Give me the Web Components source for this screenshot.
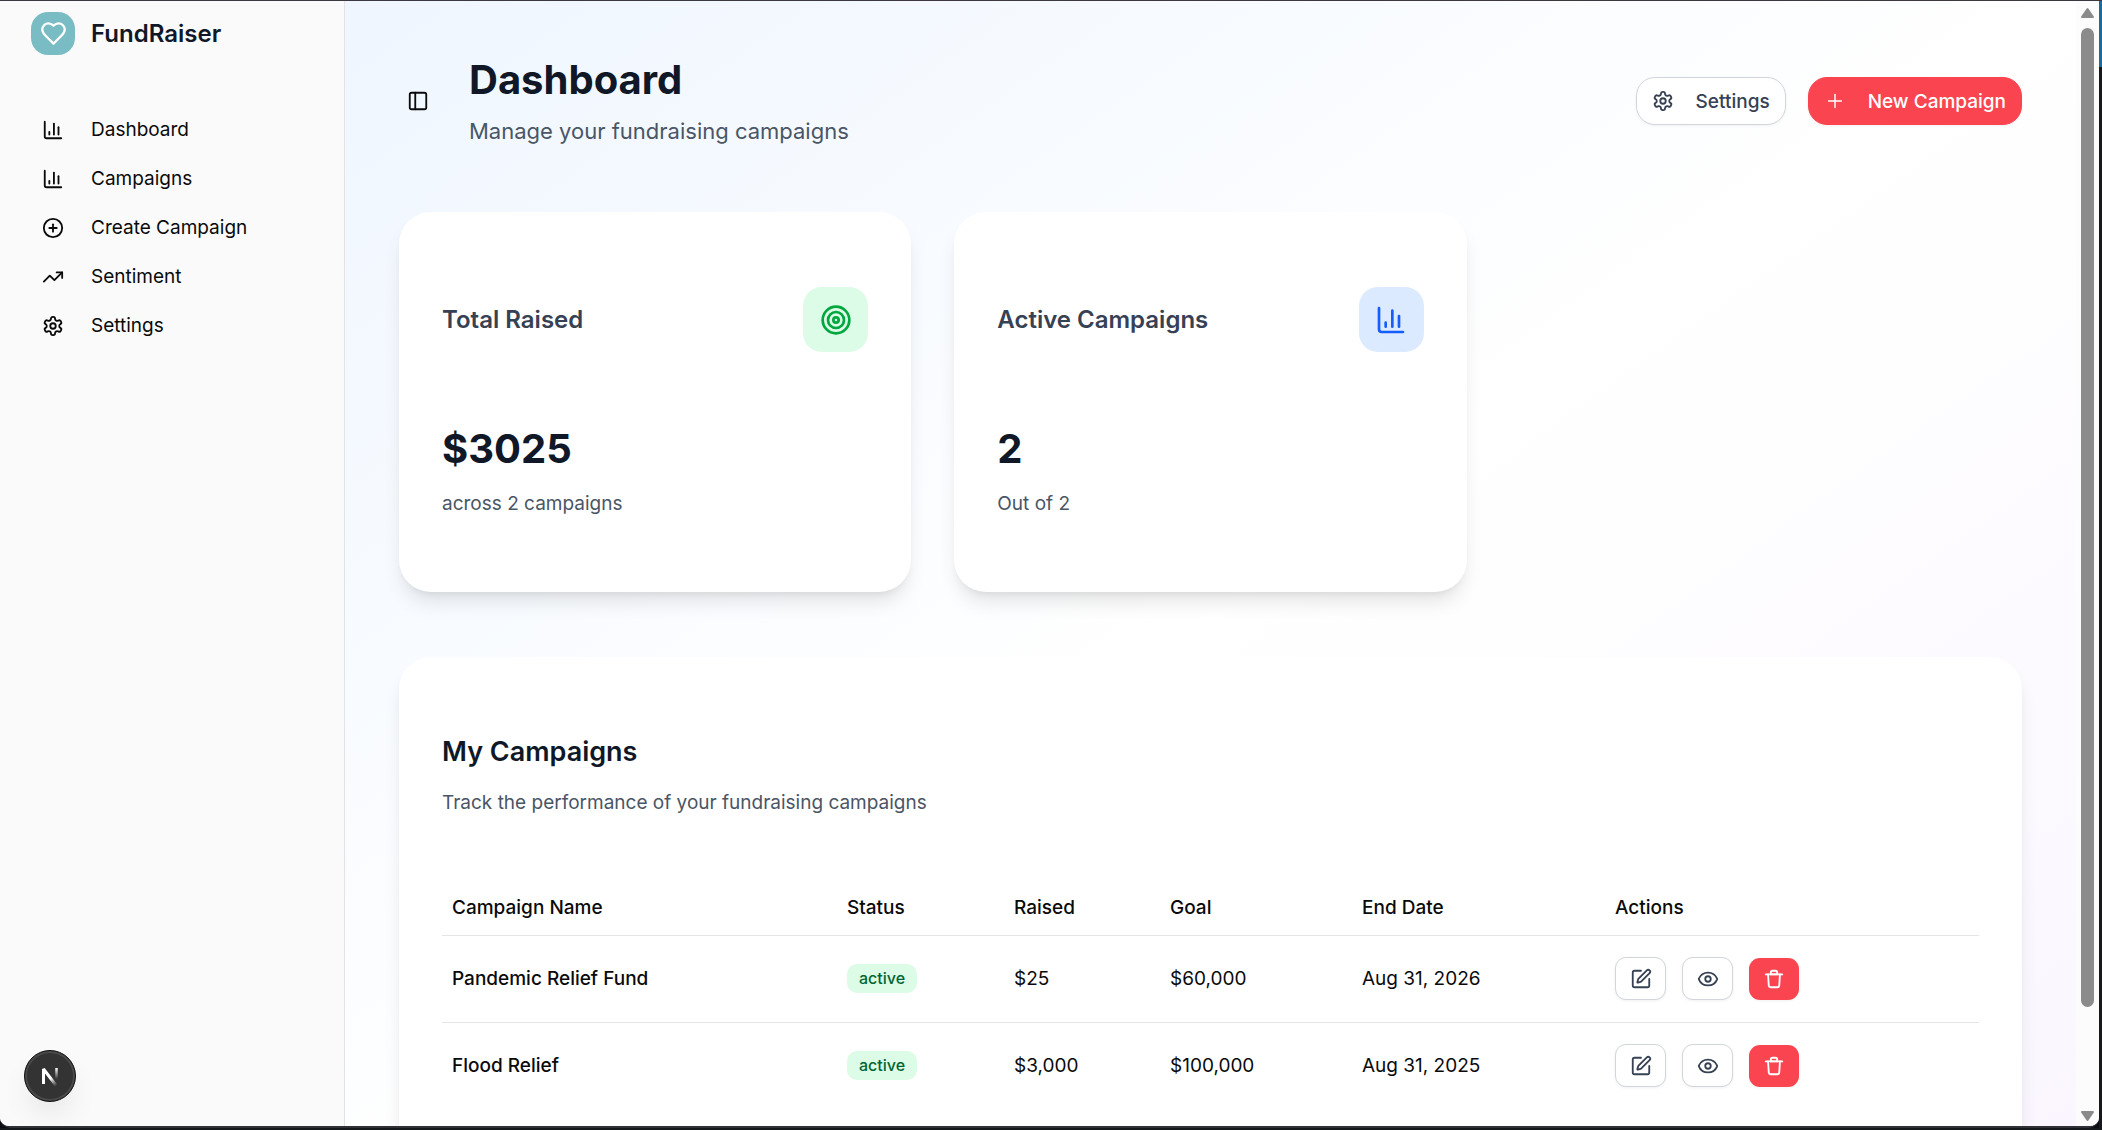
<!DOCTYPE html>
<html lang="en">
<head>
<meta charset="utf-8">
<meta name="viewport" content="width=device-width, initial-scale=1">
<title>FundRaiser</title>
<style>
  html, body { margin: 0; height: 100%; overflow: hidden; background: #0b0d13; }
  body { font-family: Inter, "Liberation Sans", sans-serif; font-size: 19px; line-height: 27px; color: #0a0a0a; }
</style>
</head>
<body>
<app-window>
  <app-sidebar slot="sidebar">
    <nav-item icon="chart">Dashboard</nav-item>
    <nav-item icon="chart">Campaigns</nav-item>
    <nav-item icon="plus-circle">Create Campaign</nav-item>
    <nav-item icon="trend">Sentiment</nav-item>
    <nav-item icon="gear">Settings</nav-item>
  </app-sidebar>
  <dashboard-page>
    <page-header slot="header" heading="Dashboard" subheading="Manage your fundraising campaigns">
      <ui-button icon="gear">Settings</ui-button>
      <ui-button icon="plus" variant="primary">New Campaign</ui-button>
    </page-header>
    <stat-card slot="stats" heading="Total Raised" icon="target" tone="green" value="$3025">across 2 campaigns</stat-card>
    <stat-card slot="stats" heading="Active Campaigns" icon="chart" tone="blue" value="2">Out of 2</stat-card>
    <campaign-list></campaign-list>
  </dashboard-page>
</app-window>

<script>
const ICONS = {
  heart: '<path d="M19 14c1.49-1.46 3-3.21 3-5.5A5.5 5.5 0 0 0 16.5 3c-1.76 0-3 .5-4.5 2-1.5-1.5-2.74-2-4.5-2A5.5 5.5 0 0 0 2 8.5c0 2.3 1.5 4.05 3 5.5l7 7Z"/>',
  chart: '<path d="M3 3v16a2 2 0 0 0 2 2h16"/><path d="M18 17V9"/><path d="M13 17V5"/><path d="M8 17v-3"/>',
  'plus-circle': '<circle cx="12" cy="12" r="10"/><path d="M8 12h8"/><path d="M12 8v8"/>',
  trend: '<path d="M16 7h6v6"/><path d="m22 7-8.500 8.500-5-5L2 17"/>',
  gear: '<path d="M12.220 2h-.44a2 2 0 0 0-2 2v.18a2 2 0 0 1-1 1.730l-.43.25a2 2 0 0 1-2 0l-.15-.08a2 2 0 0 0-2.730.73l-.22.38a2 2 0 0 0 .73 2.730l.15.1a2 2 0 0 1 1 1.720v.51a2 2 0 0 1-1 1.740l-.15.09a2 2 0 0 0-.73 2.730l.22.38a2 2 0 0 0 2.730.73l.15-.08a2 2 0 0 1 2 0l.43.25a2 2 0 0 1 1 1.730V20a2 2 0 0 0 2 2h.44a2 2 0 0 0 2-2v-.18a2 2 0 0 1 1-1.730l.43-.25a2 2 0 0 1 2 0l.15.08a2 2 0 0 0 2.730-.73l.22-.39a2 2 0 0 0-.73-2.730l-.15-.08a2 2 0 0 1-1-1.740v-.5a2 2 0 0 1 1-1.740l.15-.09a2 2 0 0 0 .73-2.730l-.22-.38a2 2 0 0 0-2.730-.73l-.15.08a2 2 0 0 1-2 0l-.43-.25a2 2 0 0 1-1-1.730V4a2 2 0 0 0-2-2z"/><circle cx="12" cy="12" r="3"/>',
  panel: '<rect x="3" y="3" width="18" height="18" rx="2"/><path d="M9 3v18"/>',
  plus: '<g stroke-width="1.600"><path d="M5 12h14"/><path d="M12 5v14"/></g>',
  target: '<circle cx="12" cy="12" r="10"/><circle cx="12" cy="12" r="6"/><circle cx="12" cy="12" r="2"/>',
  edit: '<path d="M12 3H5a2 2 0 0 0-2 2v14a2 2 0 0 0 2 2h14a2 2 0 0 0 2-2v-7"/><path d="M18.375 2.625a1 1 0 0 1 3 3l-9.013 9.014a2 2 0 0 1-.853.505l-2.873.84a.5.5 0 0 1-.62-.62l.84-2.873a2 2 0 0 1 .506-.852z"/>',
  eye: '<path d="M2.062 12.348a1 1 0 0 1 0-.696 10.750 10.750 0 0 1 19.876 0 1 1 0 0 1 0 .696 10.750 10.750 0 0 1-19.876 0"/><circle cx="12" cy="12" r="3"/>',
  trash: '<path d="M3 7h18"/><path d="M5.500 7l.8 12.200a2 2 0 0 0 2 1.800h7.400a2 2 0 0 0 2-1.800L18.500 7"/><path d="M8.500 7V5a2 2 0 0 1 2-2h3a2 2 0 0 1 2 2v2z"/>'
};

/* Registers an element whose shadow root is stamped from a template. */
function define(name, render) {
  customElements.define(name, class extends HTMLElement {
    connectedCallback() {
      if (this.shadowRoot) return;
      const t = document.createElement('template');
      t.innerHTML = render(this);
      this.attachShadow({ mode: 'open' }).append(t.content.cloneNode(true));
    }
  });
}

define('ui-icon', el => `
  <style>
    :host { display: inline-flex; flex: none; width: 22px; height: 22px; }
    svg { width: 100%; height: 100%; fill: none; stroke: currentColor; stroke-width: 2; stroke-linecap: round; stroke-linejoin: round; }
  </style>
  <svg viewBox="0 0 24 24" aria-hidden="true">${ICONS[el.getAttribute('name')]}</svg>`);

define('app-window', () => `
  <style>
    :host { display: flex; flex-direction: column; box-sizing: border-box; height: 100vh; padding-bottom: 2px; border-top: 1px solid #3b393f;
            background: linear-gradient(#1a6c9e 0 66px, #15191c 66px); }
    .base { flex: 1; min-height: 0; display: flex; margin-right: 3px; background: #0b0d13; }
    .frame { flex: 1; min-width: 0; display: flex; overflow: hidden; border-bottom: 2px solid #303136; border-radius: 0 0 10px 10px; background: #fcfcfc; }
    .view { flex: 1; min-width: 0; overflow: hidden; }
  </style>
  <div class="base"><div class="frame">
    <slot name="sidebar"></slot>
    <div class="view"><slot></slot></div>
    <scroll-track></scroll-track>
  </div></div>`);

define('scroll-track', () => `
  <style>
    :host { display: flex; flex-direction: column; align-items: center; box-sizing: border-box; width: 23px; padding: 6px 0 4px; background: #fcfcfc; }
    svg { width: 15px; height: 12px; fill: #8b8b8b; stroke: #8b8b8b; stroke-width: 2; stroke-linejoin: round; flex: none; }
    .track { flex: 1; width: 13px; margin: 9px 0 6px; }
    .thumb { height: 91%; border-radius: 7px; background: #8b8b8b; }
  </style>
  <svg viewBox="0 0 15 12" aria-hidden="true"><path d="M7.500 2 13 10H2z"/></svg>
  <div class="track"><div class="thumb"></div></div>
  <svg viewBox="0 0 15 12" aria-hidden="true"><path d="M7.500 10 13 2H2z"/></svg>`);

define('app-sidebar', () => `
  <style>
    :host { display: flex; flex-direction: column; box-sizing: border-box; flex: none; width: 345px; padding: 11px 22px 24px 31px; border-right: 1px solid #e3e3e5; background: #fafafa; }
    .brand { display: flex; align-items: center; gap: 16px; font-size: 24px; line-height: 32px; font-weight: 600; color: #101828; }
    .mark { display: flex; align-items: center; justify-content: center; width: 44px; height: 43px; border-radius: 17px; background: #7abcc3; color: #fff; }
    .mark ui-icon { width: 27px; height: 27px; }
    nav { display: flex; flex-direction: column; margin-top: 50px; }
    dev-badge { margin-top: auto; }
  </style>
  <div class="brand"><span class="mark"><ui-icon name="heart"></ui-icon></span><span>FundRaiser</span></div>
  <nav><slot></slot></nav>
  <dev-badge></dev-badge>`);

define('nav-item', el => `
  <style>
    :host { display: block; }
    a { display: flex; align-items: center; gap: 27px; height: 49px; padding-left: 11px; color: #0a0a0a; text-decoration: none; }
  </style>
  <a href="#"><ui-icon name="${el.getAttribute('icon')}"></ui-icon><span><slot></slot></span></a>`);

define('dev-badge', () => `
  <style>
    :host { display: block; margin-left: -7px; }
    button { display: flex; align-items: center; justify-content: center; box-sizing: border-box; width: 52px; height: 52px; padding: 0; border: 1px solid #111; border-radius: 50%; background: #333;
             box-shadow: inset 0 0 0 2px #4a4a4a, 0 16px 32px -8px rgba(0,0,0,.12); }
    svg { width: 22px; height: 22px; fill: none; stroke-width: 3; }
  </style>
  <button type="button" aria-label="Open developer tools">
    <svg viewBox="0 0 22 22" aria-hidden="true">
      <defs>
        <linearGradient id="d" gradientUnits="userSpaceOnUse" x1="12" y1="13" x2="18" y2="20"><stop offset="0" stop-color="#fff"/><stop offset="1" stop-color="#fff" stop-opacity="0"/></linearGradient>
        <linearGradient id="v" gradientUnits="userSpaceOnUse" x1="16" y1="3" x2="16" y2="14"><stop offset="0" stop-color="#fff"/><stop offset="1" stop-color="#fff" stop-opacity="0"/></linearGradient>
      </defs>
      <path d="M4.500 19V4L17.500 21" stroke="url(#d)" stroke-linejoin="bevel"/>
      <path d="M17.500 3v11" stroke="url(#v)" stroke-width="2.500"/>
    </svg>
  </button>`);

define('dashboard-page', () => `
  <style>
    :host { display: block; padding: 54px; background: linear-gradient(to bottom right, #eff6ff, #fff, #faf5ff); }
    .stats { display: grid; grid-template-columns: repeat(3, 1fr); gap: 43px; margin: 65px 0; }
  </style>
  <slot name="header"></slot>
  <div class="stats"><slot name="stats"></slot></div>
  <slot></slot>`);

define('page-header', el => `
  <style>
    :host { display: flex; align-items: center; }
    .toggle { display: flex; align-items: center; justify-content: center; width: 38px; height: 38px; margin-right: 32px; padding: 0; border: 0; border-radius: 8px; background: none; color: #0a0a0a; }
    .titles { flex: 1; }
    h1 { margin: 0 0 11px; font-size: 40px; line-height: 49px; font-weight: 700; color: #101828; }
    p { margin: 0; font-size: 22px; line-height: 32px; color: #4a5565; }
    .actions { display: flex; gap: 22px; }
  </style>
  <button class="toggle" type="button" aria-label="Toggle sidebar"><ui-icon name="panel"></ui-icon></button>
  <div class="titles"><h1>${el.getAttribute('heading')}</h1><p>${el.getAttribute('subheading')}</p></div>
  <div class="actions"><slot></slot></div>`);

define('ui-button', el => `
  <style>
    :host { display: block; }
    button { display: flex; align-items: center; gap: 22px; height: 48px; box-sizing: border-box; padding: 0 15px; border: 1px solid #d1d5dc; border-radius: 19px; background: #fff;
             font: 500 19px/27px Inter, "Liberation Sans", sans-serif; color: #364153; box-shadow: 0 1px 3px rgba(0,0,0,.06); }
    :host([variant=primary]) button { background: #fa4550; border-color: #fa4550; color: #fff; }
  </style>
  <button type="button"><ui-icon name="${el.getAttribute('icon')}"></ui-icon><span><slot></slot></span></button>`);

define('stat-card', el => `
  <style>
    :host { display: block; padding: 75px 43px; border-radius: 32px; background: #fff; box-shadow: 0 14px 20px -4px rgba(0,0,0,.1), 0 5px 8px -5px rgba(0,0,0,.1); }
    .top { display: flex; align-items: center; justify-content: space-between; margin-bottom: 72px; }
    h2 { margin: 0; font-size: 24px; line-height: 38px; font-weight: 600; color: #364153; }
    .tile { display: flex; align-items: center; justify-content: center; width: 65px; height: 65px; border-radius: 19px; background: #dcfce7; color: #00a63e; }
    :host([tone=blue]) .tile { background: #dbeafe; color: #155dfc; }
    .tile ui-icon { width: 32px; height: 32px; }
    .value { margin: 0 0 17px; font-size: 40px; line-height: 49px; font-weight: 700; color: #101828; }
    .note { margin: 0; color: #4a5565; }
  </style>
  <div class="top"><h2>${el.getAttribute('heading')}</h2><span class="tile"><ui-icon name="${el.getAttribute('icon')}"></ui-icon></span></div>
  <p class="value">${el.getAttribute('value')}</p>
  <p class="note"><slot></slot></p>`);

define('status-badge', () => `
  <style>
    :host { display: inline-block; vertical-align: middle; padding: 3px 12px; border-radius: 10px; background: #dcfce7; color: #016630; font-size: 16px; line-height: 23px; font-weight: 500; }
  </style><slot></slot>`);

define('row-action', el => `
  <style>
    :host { display: block; }
    button { display: flex; align-items: center; justify-content: center; box-sizing: border-box; width: 51px; height: 43px; padding: 0; border: 1px solid #d1d5dc; border-radius: 11px; background: #fff; color: #364153; box-shadow: 0 1px 3px rgba(0,0,0,.06); }
    :host([icon=trash]) button { width: 50px; height: 42px; border: 0; background: #fa4550; color: #fff; }
  </style>
  <button type="button" aria-label="${el.getAttribute('label')}"><ui-icon name="${el.getAttribute('icon')}"></ui-icon></button>`);

const CAMPAIGNS = [
  ['Pandemic Relief Fund', 'active', '$25', '$60,000', 'Aug 31, 2026'],
  ['Flood Relief', 'active', '$3,000', '$100,000', 'Aug 31, 2025']
];

define('campaign-list', () => `
  <style>
    :host { display: block; padding: 76px 43px; border-radius: 32px; background: #fff; box-shadow: 0 14px 20px -4px rgba(0,0,0,.1), 0 5px 8px -5px rgba(0,0,0,.1); }
    h2 { margin: 0 0 18px; font-size: 27px; line-height: 38px; font-weight: 600; color: #101828; }
    p { margin: 0 0 64px; color: #4a5565; }
    table { width: 100%; table-layout: fixed; border-collapse: collapse; }
    th, td { box-sizing: border-box; padding: 0 10px; text-align: left; vertical-align: middle; font-weight: 400; }
    th, td:first-child { font-weight: 500; }
    th { height: 55px; }
    td { height: 87px; }
    tr { border-bottom: 1px solid #e5e5e5; }
    tbody tr:last-child { border-bottom: 0; }
    .actions { display: flex; align-items: center; gap: 16px; }
  </style>
  <h2>My Campaigns</h2>
  <p>Track the performance of your fundraising campaigns</p>
  <table>
    <colgroup><col style="width:395px"><col style="width:167px"><col style="width:156px"><col style="width:192px"><col style="width:253px"><col style="width:374px"></colgroup>
    <thead><tr><th>Campaign Name</th><th>Status</th><th>Raised</th><th>Goal</th><th>End Date</th><th>Actions</th></tr></thead>
    <tbody>${CAMPAIGNS.map(([name, status, raised, goal, end]) => `
      <tr><td>${name}</td><td><status-badge>${status}</status-badge></td><td>${raised}</td><td>${goal}</td><td>${end}</td>
      <td><div class="actions"><row-action icon="edit" label="Edit ${name}"></row-action><row-action icon="eye" label="View ${name}"></row-action><row-action icon="trash" label="Delete ${name}"></row-action></div></td></tr>`).join('')}
    </tbody>
  </table>`);
</script>
</body>
</html>
